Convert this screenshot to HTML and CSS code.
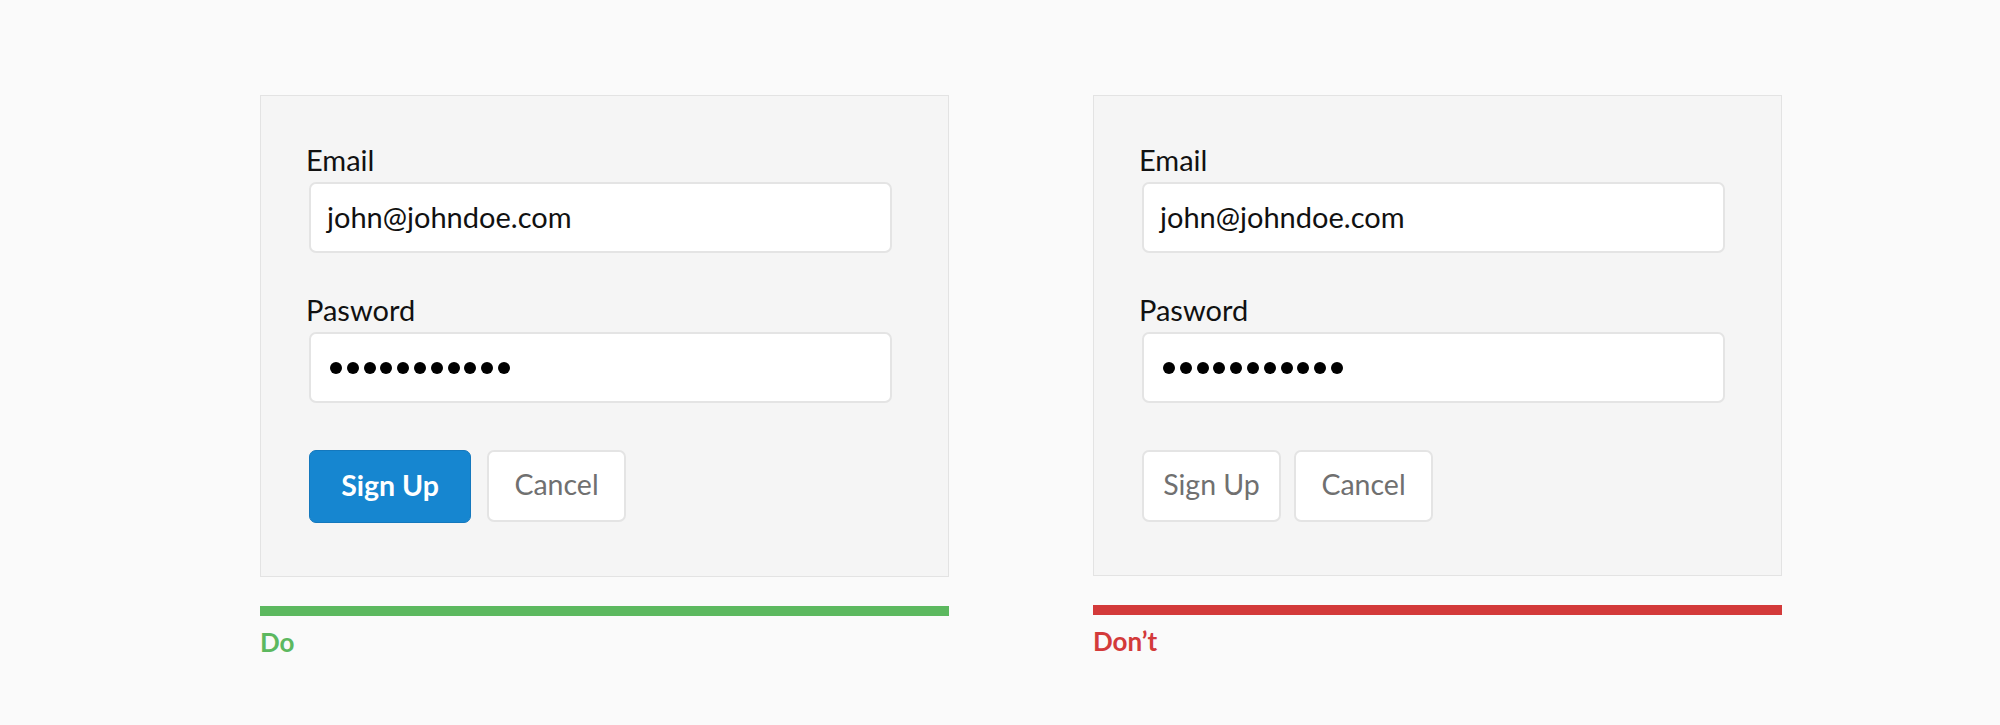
FILE: index.html
```html
<!DOCTYPE html>
<html lang="en">
<head>
<meta charset="utf-8">
<title>Do / Don't — Sign Up form</title>
<link rel="stylesheet" href="styles.css">
</head>
<body>
<main class="compare">
  <section class="example">
    <div class="card">
      <div class="field">
        <div class="label">Email</div>
        <div class="input">john@johndoe.com</div>
      </div>
      <div class="field">
        <div class="label">Pasword</div>
        <div class="input"><span class="dots"><i></i><i></i><i></i><i></i><i></i><i></i><i></i><i></i><i></i><i></i><i></i></span></div>
      </div>
      <div class="actions actions-do">
        <button class="btn btn-primary">Sign Up</button>
        <button class="btn">Cancel</button>
      </div>
    </div>
    <div class="bar bar-do"></div>
    <div class="verdict verdict-do">Do</div>
  </section>
  <section class="example">
    <div class="card">
      <div class="field">
        <div class="label">Email</div>
        <div class="input">john@johndoe.com</div>
      </div>
      <div class="field">
        <div class="label">Pasword</div>
        <div class="input"><span class="dots"><i></i><i></i><i></i><i></i><i></i><i></i><i></i><i></i><i></i><i></i><i></i></span></div>
      </div>
      <div class="actions">
        <button class="btn">Sign Up</button>
        <button class="btn">Cancel</button>
      </div>
    </div>
    <div class="bar bar-dont"></div>
    <div class="verdict verdict-dont">Don’t</div>
  </section>
</main>
</body>
</html>
```
FILE: styles.css
```css
* { box-sizing: border-box; }
html, body { margin: 0; padding: 0; }
body {
  background: #fafafa;
  font-family: Lato, "Open Sans", "Liberation Sans", sans-serif;
  color: #111;
  width: 2000px;
  height: 725px;
  overflow: hidden;
}
.compare {
  display: flex;
  gap: 144px;
  padding: 95px 0 0 260px;
}
.example {
  width: 689px;
  display: flex;
  flex-direction: column;
}
.card {
  background: #f5f5f5;
  border: 1px solid #e3e3e3;
  padding: 46px 56px 53px 48px;
  display: flex;
  flex-direction: column;
  gap: 39px;
}
.field {
  display: flex;
  flex-direction: column;
  gap: 5px;
}
.label {
  font-size: 29px;
  line-height: 35px;
  color: #111;
  margin-left: -3px;
}
.input {
  height: 71px;
  background: #fff;
  border: 2px solid #e4e4e4;
  border-radius: 7px;
  padding: 0 16px 2px;
  display: flex;
  align-items: center;
  font-size: 29px;
  color: #111;
}
.dots {
  display: flex;
  gap: 4.8px;
  padding-left: 3px;
  padding-top: 2px;
}
.dots i {
  display: block;
  width: 12px;
  height: 12px;
  border-radius: 50%;
  background: #000;
}
.actions {
  display: flex;
  gap: 13px;
  margin-top: 8px;
}
.actions-do { gap: 16px; }
.btn {
  height: 72px;
  width: 139px;
  padding: 0 0 4px;
  text-align: center;
  font-family: inherit;
  font-size: 28.5px;
  color: #707070;
  background: #fff;
  border: 2px solid #e4e4e4;
  border-radius: 7px;
}
.btn-primary {
  height: 73px;
  width: 162px;
  color: #fff;
  font-weight: 700;
  background: #1686d0;
  border: 1px solid #1478bd;
}
.bar {
  height: 10px;
  margin-top: 29px;
}
.bar-do { background: #5cb85f; }
.bar-dont { background: #d33a3a; }
.verdict {
  font-size: 26px;
  font-weight: 700;
  line-height: 32px;
  margin-top: 10px;
}
.verdict-do { color: #5cb85f; }
.verdict-dont { color: #d33a3a; }
```
